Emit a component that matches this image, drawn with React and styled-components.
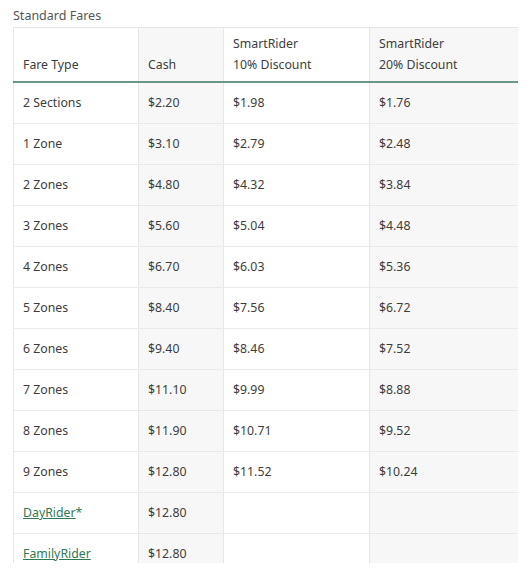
import styled, { createGlobalStyle } from "styled-components";

const GlobalStyle = createGlobalStyle`
    body{
        margin: 0;
        background: #fff;
        font-family: "Noto Sans", "Open Sans", sans-serif;
        color: #3d3d3d;
    }
`

const Wrapper = styled.div`
    padding: 8px 11px 0 13px;
    width: 505px;
`

const Title = styled.h3`
    margin: 0 0 3px 0;
    font-size: 12.5px;
    font-weight: 400;
    line-height: 16px;
    color: #555;
`

const Clip = styled.div`
    height: 536px;
    overflow: hidden;
`

const Table = styled.table`
    width: 505px;
    border-collapse: collapse;
    table-layout: fixed;
    font-size: 12.3px;
    border: 1px solid #e6e6e6;
`

const Col = styled.col`
    width: ${p => p.$w}px;
    background: ${p => p.$shade ? "#f7f7f7" : "#fff"};
`

const Th = styled.th`
    text-align: left;
    font-weight: 400;
    vertical-align: bottom;
    height: 47px;
    padding: 0 9px 6px 9px;
    line-height: 21px;
    border-right: 1px solid #e6e6e6;
    border-bottom: 2px solid #6b9584;
`

const Td = styled.td`
    height: 39px;
    padding: 0 9px 1px 9px;
    border-right: 1px solid #e6e6e6;
    border-bottom: 1px solid #eaeaea;
`

const FareLink = styled.a`
    color: #2f7a55;
    text-decoration: underline;
`

const Star = styled.span`
    color: #2f7a55;
`

const rows = [
    ["2 Sections", "$2.20", "$1.98", "$1.76"],
    ["1 Zone", "$3.10", "$2.79", "$2.48"],
    ["2 Zones", "$4.80", "$4.32", "$3.84"],
    ["3 Zones", "$5.60", "$5.04", "$4.48"],
    ["4 Zones", "$6.70", "$6.03", "$5.36"],
    ["5 Zones", "$8.40", "$7.56", "$6.72"],
    ["6 Zones", "$9.40", "$8.46", "$7.52"],
    ["7 Zones", "$11.10", "$9.99", "$8.88"],
    ["8 Zones", "$11.90", "$10.71", "$9.52"],
    ["9 Zones", "$12.80", "$11.52", "$10.24"],
]

const App = () => {
    return (
        <>
            <GlobalStyle />
            <Wrapper>
                <Title>Standard Fares</Title>
                <Clip>
                    <Table>
                        <colgroup>
                            <Col $w={125} />
                            <Col $w={85} $shade />
                            <Col $w={146} />
                            <Col $w={149} $shade />
                        </colgroup>
                        <thead>
                            <tr>
                                <Th>Fare Type</Th>
                                <Th>Cash</Th>
                                <Th>SmartRider<br />10% Discount</Th>
                                <Th>SmartRider<br />20% Discount</Th>
                            </tr>
                        </thead>
                        <tbody>
                            {rows.map(r => (
                                <tr key={r[0]}>
                                    {r.map((c, i) => <Td key={i}>{c}</Td>)}
                                </tr>
                            ))}
                            <tr>
                                <Td><FareLink href="#">DayRider</FareLink><Star>*</Star></Td>
                                <Td>$12.80</Td>
                                <Td></Td>
                                <Td></Td>
                            </tr>
                            <tr>
                                <Td><FareLink href="#">FamilyRider</FareLink></Td>
                                <Td>$12.80</Td>
                                <Td></Td>
                                <Td></Td>
                            </tr>
                        </tbody>
                    </Table>
                </Clip>
            </Wrapper>
        </>
    );
}

export default App;
